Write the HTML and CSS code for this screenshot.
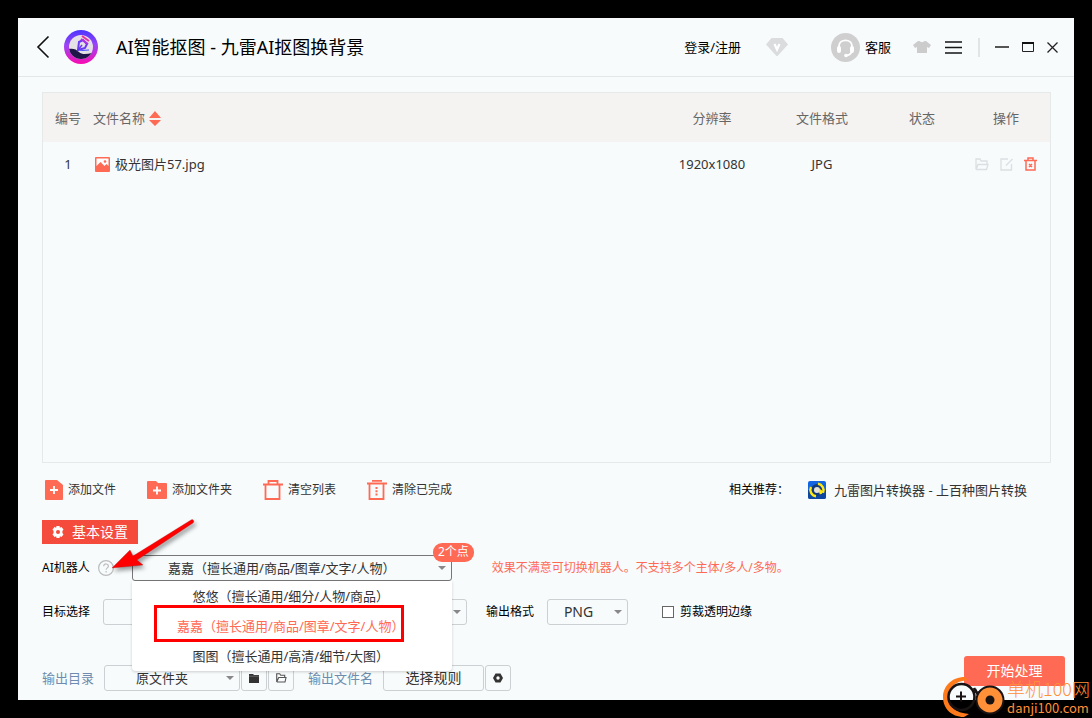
FILE: index.html
```html
<!DOCTYPE html>
<html lang="zh-CN">
<head>
<meta charset="utf-8">
<title>AI智能抠图 - 九雷AI抠图换背景</title>
<link rel="stylesheet" href="styles.css">
</head>
<body>
<main class="window">
  <header class="titlebar">
    <button class="icon-btn back" aria-label="返回"><svg width="14" height="24" viewBox="0 0 14 24"><path d="M12.500 1.500 2 12l10.500 10.500" fill="none" stroke="#111" stroke-width="1.600"/></svg></button>
    <svg class="logo" width="34" height="34" viewBox="0 0 34 34">
      <defs>
        <linearGradient id="ring" x1="0" y1="0" x2="0" y2="1"><stop offset="0" stop-color="#4b35ff"/><stop offset=".45" stop-color="#9b45f5"/><stop offset="1" stop-color="#fb0bb0"/></linearGradient>
        <clipPath id="disc"><circle cx="17" cy="17" r="12"/></clipPath>
      </defs>
      <circle cx="17" cy="17" r="17" fill="url(#ring)"/>
      <g clip-path="url(#disc)">
        <rect width="34" height="34" fill="#e3e0e6"/>
        <path d="M4 19c5-1 8 0 11 3 3 3 8 2 13 1v8H4z" fill="#1e1648"/>
      </g>
      <path d="m14 20 1-8 4-2 4 4-2 4z" fill="none" stroke="#6a38f5" stroke-width="2"/>
      <path d="m18 6 7 5" stroke="#ea2fa0" stroke-width="2"/>
      <path d="m17 9 7 5" stroke="#b032e0" stroke-width="2"/>
      <path d="m14 20 4-5" stroke="#6a38f5" stroke-width="1.500"/>
      <path d="M16 20c2 1 5 0 9 0" fill="none" stroke="#4a4fff" stroke-width="1.200"/>
    </svg>
    <h1 class="title">AI智能抠图 - 九雷AI抠图换背景</h1>
    <a class="login" href="#">登录/注册</a>
    <button class="icon-btn vip" aria-label="会员"><svg width="22" height="20" viewBox="0 0 22 20"><path d="M5.500 1h11L22 7.500 11.500 19h-1L0 7.500z" fill="#dadcde"/><path d="m8.500 7 2.500 5.500L13.500 7" fill="none" stroke="#fff" stroke-width="2.200"/></svg></button>
    <button class="icon-btn service"><svg width="29" height="29" viewBox="0 0 29 29"><circle cx="14.500" cy="14.500" r="14.500" fill="#cfcfcf"/><path d="M8 15v-2c0-7.500 13-7.500 13 0v3c0 4-2 6-5 6.500" fill="none" stroke="#fff" stroke-width="1.800"/><rect x="6" y="13" width="4" height="7" rx="2" fill="#fff"/><rect x="19" y="13" width="4" height="7" rx="2" fill="#fff"/><circle cx="15" cy="22.500" r="1.800" fill="#fff"/></svg>客服</button>
    <button class="icon-btn skin" aria-label="换肤"><svg width="18" height="14" viewBox="0 0 18 14"><path d="M5 1h1.500c1 1.500 4 1.500 5 0H13l5 4-2 3-2-1v6H4V7L2 8 0 5z" fill="#ccc"/></svg></button>
    <button class="icon-btn menu" aria-label="菜单"><svg width="17" height="13" viewBox="0 0 17 13"><path d="M0 1h17M0 6.500h17M0 12h17" stroke="#151515" stroke-width="1.600"/></svg></button>
    <span class="divider"></span>
    <button class="icon-btn min" aria-label="最小化"><svg width="14" height="12" viewBox="0 0 14 12"><path d="M0 6h14" stroke="#555" stroke-width="2"/></svg></button>
    <button class="icon-btn max" aria-label="最大化"><svg width="12" height="10" viewBox="0 0 12 10"><path d="M.5.500h11v9H.5z" fill="none" stroke="#222"/><path d="M0 1h12" stroke="#111" stroke-width="2"/></svg></button>
    <button class="icon-btn" aria-label="关闭"><svg width="11" height="11" viewBox="0 0 11 11"><path d="m.5.500 10 10M10.500.500l-10 10" stroke="#222" stroke-width="1.300"/></svg></button>
  </header>

  <section class="content">
    <div class="files">
      <table class="file-table">
        <colgroup><col class="c-no"><col><col class="c-res"><col class="c-fmt"><col class="c-state"><col class="c-ops"></colgroup>
        <thead>
          <tr><th>编号</th><th class="name">文件名称<svg class="sort" width="12" height="16" viewBox="0 0 12 16"><path d="m6 0 6 7H0zM0 9h12l-6 6z" fill="#ff6a55"/></svg></th><th>分辨率</th><th>文件格式</th><th>状态</th><th>操作</th></tr>
        </thead>
        <tbody>
          <tr>
            <td>1</td>
            <td class="name"><span class="file"><svg width="15" height="15" viewBox="0 0 15 15"><rect width="15" height="15" rx="1" fill="#ff6a55"/><path d="M1.500 1.500h12V9l-2-2-2 2-4-4-4 4z" fill="#fff"/><circle cx="10" cy="4.500" r="1.300" fill="#ff6a55"/></svg>极光图片57.jpg</span></td>
            <td>1920x1080</td><td>JPG</td><td></td>
            <td><div class="ops">
              <button class="icon-btn" aria-label="打开"><svg width="14" height="13" viewBox="0 0 14 13"><path d="M1 11.500V1h4l1 2h6v3M1 11.500h10.500l1.500-5H3L1 11.500" fill="none" stroke="#dcdfe1" stroke-width="1.300"/></svg></button>
              <button class="icon-btn" aria-label="编辑"><svg width="13" height="13" viewBox="0 0 13 13"><path d="M8 1H1v11h10.500V6M6 7.500 12.500 1" fill="none" stroke="#dcdfe1" stroke-width="1.300"/></svg></button>
              <button class="icon-btn" aria-label="删除"><svg width="13" height="14" viewBox="0 0 13 14"><path d="M0 3.500h13M4 3V1h5v2M2 4v9h9V4M5 7l3 3M8 7l-3 3" fill="none" stroke="#ff6a55" stroke-width="1.500"/></svg></button>
            </div></td>
          </tr>
        </tbody>
      </table>
    </div>

    <div class="toolbar">
      <button class="tool"><svg width="18" height="20" viewBox="0 0 18 20"><path d="M1 0h11l6 5v14a1 1 0 0 1-1 1H1a1 1 0 0 1-1-1V1a1 1 0 0 1 1-1z" fill="#ff6a55"/><path d="M9 6v8M5 10h8" stroke="#fff" stroke-width="1.800"/></svg>添加文件</button>
      <button class="tool"><svg width="20" height="18" viewBox="0 0 20 18"><path d="M1 0h8l2 2h8a1 1 0 0 1 1 1v14a1 1 0 0 1-1 1H1a1 1 0 0 1-1-1V1a1 1 0 0 1 1-1z" fill="#ff6a55"/><path d="M10 5.500v8M6 9.500h8" stroke="#fff" stroke-width="1.800"/></svg>添加文件夹</button>
      <button class="tool"><svg width="20" height="20" viewBox="0 0 20 20"><path d="M0 4.500h20M5.500 4V1h9v3M2.500 5v14h14V5" fill="none" stroke="#ff6a55" stroke-width="1.800"/></svg>清空列表</button>
      <button class="tool"><svg width="20" height="20" viewBox="0 0 20 20"><path d="M0 3.500h20M5 .800h10M2.500 4v15h14V4" fill="none" stroke="#ff6a55" stroke-width="1.800"/><path d="M9.500 7v8.500" stroke="#ff6a55" stroke-width="2" stroke-dasharray="2 1.200"/></svg>清除已完成</button>
      <span class="recommend">相关推荐：</span>
      <a class="product" href="#"><svg width="18" height="18" viewBox="0 0 18 18"><rect width="18" height="18" rx="2" fill="#1264e0"/><path d="M0 9h18v7a2 2 0 0 1-2 2H2a2 2 0 0 1-2-2z" fill="#0d479f"/><circle cx="9" cy="9" r="6" fill="#123a7a"/><path d="M10 2.800a6.500 6.500 0 0 1 5 9M3 6a6.500 6.500 0 0 0 5 9.300M12 10l1 3" fill="none" stroke="#ffe814" stroke-width="2.400"/><circle cx="9" cy="9" r="3" fill="#e8e2d4"/><path d="m12 8 4 3-4 2z" fill="#ffe814"/></svg>九雷图片转换器 - 上百种图片转换</a>
    </div>

    <h2 class="section-tag"><svg width="12" height="12" viewBox="0 0 12 12"><path d="M4.500 0h3l.4 1.700 1.600-.6L11.500 3.500 10.400 5v2l1.100 1.500-2 2.400-1.600-.6-.4 1.700h-3l-.4-1.700-1.600.6-2-2.400L1.600 7V5L.5 3.500l2-2.400 1.600.6z" fill="#fff"/><circle cx="6" cy="6" r="2" fill="#f44b3c"/></svg>基本设置</h2>

    <div class="row robot-row">
      <label class="label" for="robot">AI机器人</label>
      <button class="icon-btn help" aria-label="帮助"><svg width="16" height="16" viewBox="0 0 16 16"><circle cx="8" cy="8" r="7.400" fill="none" stroke="#bdbdbd" stroke-width="1.200"/><path d="M5.700 6.300c0-3.200 4.700-3 4.700 0 0 1.500-2.300 1.700-2.300 3.400M8.100 11v1.400" fill="none" stroke="#bdbdbd" stroke-width="1.200"/></svg></button>
      <div class="combo robot">
        <select id="robot"><option>嘉嘉（擅长通用/商品/图章/文字/人物）</option></select>
        <span class="badge">2个点</span>
        <ul class="options" role="listbox">
          <li role="option">悠悠（擅长通用/细分/人物/商品）</li>
          <li role="option" class="active" aria-selected="true">嘉嘉（擅长通用/商品/图章/文字/人物）<span class="marker"></span></li>
          <li role="option">图图（擅长通用/高清/细节/大图）</li>
        </ul>
      </div>
      <span class="hint">效果不满意可切换机器人。不支持多个主体/多人/多物。</span>
      <svg class="arrow" width="92" height="58" viewBox="0 0 92 58"><path d="M79 3a1.800 1.800 0 0 1 2 3L25 43l6 5-31 3 18-18 3 6z" fill="#f00" stroke="#a01010" stroke-width=".3"/></svg>
    </div>

    <div class="row target-row">
      <label class="label" for="target">目标选择</label>
      <div class="combo target"><select id="target"><option></option></select></div>
      <label class="label" for="format">输出格式</label>
      <div class="combo format"><select id="format"><option>PNG</option></select></div>
      <label class="check"><input type="checkbox">剪裁透明边缘</label>
    </div>
  </section>

  <footer class="footer">
    <div class="output">
      <label class="out-label" for="dir">输出目录</label>
      <div class="combo dir"><select id="dir"><option>原文件夹</option></select></div>
      <button class="small-btn" aria-label="选择文件夹"><svg width="10" height="9" viewBox="0 0 10 9"><path d="M0 0h4l1 1h5v8H0z" fill="#333"/><path d="M0 2.200h10" stroke="#999" stroke-width=".5"/></svg></button>
      <button class="small-btn" aria-label="打开文件夹"><svg width="11" height="10" viewBox="0 0 11 10"><path d="M.7 9V.7h3l1 1.500h4V4M.7 9h8.300l1-4.500H2.700L.7 9" fill="none" stroke="#555" stroke-width="1.100"/></svg></button>
      <span class="out-label file-name">输出文件名</span>
      <button class="rule-btn">选择规则</button>
      <button class="small-btn" aria-label="规则设置"><svg width="10" height="10" viewBox="0 0 10 10"><path d="M2.500.500h5L10 5 7.500 9.500h-5L0 5z" fill="#333"/><circle cx="5" cy="5" r="1.700" fill="#fff"/></svg></button>
    </div>
    <button class="start">开始处理</button>
  </footer>
</main>

<div class="watermark">
  <svg width="62" height="42" viewBox="0 0 62 42">
    <path d="M22 1C8 1 0 11 0 21c0 11 8 20 21 20l5-3C12 37 5 30 5 21 5 12 12 5 25 4z" fill="#ff7a1a"/>
    <circle cx="18.500" cy="21" r="13" fill="none" stroke="#181212" stroke-width="2.600"/>
    <path d="M31 12c2 6 5 6 8 2M32 13l3 6" fill="none" stroke="#181212" stroke-width="2.500"/>
    <path d="M18 15.500v10M13 20.500h10" stroke="#181212" stroke-width="2"/>
    <circle cx="47" cy="24" r="13.500" fill="#ff9038" stroke="#181212" stroke-width="2"/>
    <circle cx="47" cy="24" r="4.500" fill="#181212"/>
  </svg>
  <div class="mark-text"><span class="mark-name">单机100网</span><span class="mark-url">danji100.com</span></div>
</div>
</body>
</html>
```
FILE: styles.css
```css
* { box-sizing: border-box; }
body {
  margin: 0;
  min-height: 100vh;
  padding: 18px;
  display: flex;
  position: relative;
  background: #000;
  color: #333;
  font: 13px/20px "Noto Sans", "Noto Sans CJK SC", sans-serif;
}
button, select, input { font: inherit; color: inherit; margin: 0; }
button { cursor: pointer; }
a { color: inherit; text-decoration: none; }
svg { display: block; flex: none; }

.window {
  flex: 1;
  min-width: 0;
  display: flex;
  flex-direction: column;
  background: #f7fbfc;
}

.titlebar {
  height: 59px;
  padding: 0 16px 0 18px;
  display: flex;
  align-items: center;
  border-bottom: 1px solid #e4e7e8;
  color: #000;
}
.icon-btn { padding: 0; border: 0; background: none; display: flex; align-items: center; }
.back { margin-right: 14px; }
.title { margin: 0 auto 0 18px; font-size: 18px; font-weight: 400; line-height: 28px; }
.login { margin-right: 25px; }
.vip { margin-right: 43px; }
.service { gap: 5px; margin-right: 22px; }
.skin { margin-right: 14px; }
.menu { margin-right: 16px; }
.divider { width: 2px; height: 19px; background: #e2e5e6; margin-right: 15px; }
.min { margin-right: 13px; }
.max { margin-right: 13px; }

.content {
  flex: 1;
  padding: 15px 23px 0 24px;
  display: flex;
  flex-direction: column;
}
.files { flex: 1; border: 1px solid #e6e9ea; }
.file-table { width: 100%; table-layout: fixed; border-collapse: collapse; text-align: center; }
.file-table th { height: 49px; padding: 0; background: #f5f3f1; color: #666; font-weight: 400; }
.file-table td { height: 44px; padding: 0; }
.file-table .name { text-align: left; }
.c-no { width: 50px; }
.c-res { width: 100px; }
.c-fmt { width: 120px; }
.c-state { width: 80px; }
.c-ops { width: 88px; }
.sort { display: inline-block; vertical-align: middle; margin-left: 4px; }
.file { display: flex; align-items: center; gap: 5px; padding-left: 2px; }
.ops { display: flex; justify-content: center; gap: 11px; }

.toolbar { height: 24px; margin-top: 15px; padding-left: 3px; display: flex; align-items: center; font-size: 12px; }
.tool { margin-right: 31px; padding: 0; border: 0; background: none; display: flex; align-items: center; gap: 5px; }
.recommend { margin-left: auto; margin-right: 19px; color: #000; }
.product { display: flex; align-items: center; gap: 8px; margin-right: 24px; font-size: 13px; }

.section-tag {
  align-self: flex-start;
  margin: 18px 0 0;
  height: 24px;
  padding: 0 10px;
  display: flex;
  align-items: center;
  gap: 8px;
  background: #f44b3c;
  color: #fff;
  font-size: 14px;
  font-weight: 400;
}

.row { display: flex; align-items: center; height: 26px; position: relative; font-size: 12px; color: #000; }
.robot-row { margin-top: 11px; z-index: 2; }
.target-row { margin-top: 18px; }
.label { flex: none; }
.help { margin: 0 18px 0 8px; }

.combo { position: relative; height: 26px; font-size: 13px; color: #333; }
.combo select {
  appearance: none;
  width: 100%;
  height: 100%;
  padding: 0 28px 0 8px;
  border: 1px solid #cdd0d2;
  border-radius: 3px;
  background: #f7fbfc;
  text-align: center;
  text-align-last: center;
}
.combo::after {
  content: "";
  position: absolute;
  right: 6px;
  top: 11px;
  border: 4px solid transparent;
  border-top-color: #888;
  border-bottom: 0;
}
.robot { width: 320px; }
.robot select { border-color: #777; }
.badge {
  position: absolute;
  right: -22px;
  top: -12px;
  height: 19px;
  padding: 0 5px;
  border-radius: 9px;
  background: #ff6a55;
  color: #fff;
  font-size: 12px;
  line-height: 18px;
}
.options {
  position: absolute;
  top: 26px;
  left: 0;
  right: 0;
  margin: 0;
  padding: 0;
  list-style: none;
  background: #fff;
  border-radius: 0 0 4px 4px;
  box-shadow: 0 1px 3px rgba(0, 0, 0, .18);
  line-height: 30px;
  text-align: center;
}
.options li { position: relative; padding-right: 2px; }
.options .active { color: #ff6a55; }
.marker { position: absolute; left: 22px; right: 48px; top: -6px; bottom: -1px; border: 3px solid #f00; }
.hint { margin-left: 40px; color: #ff6a55; }
.arrow { position: absolute; left: 70px; top: -38px; filter: drop-shadow(2px 3px 2px rgba(0, 0, 0, .4)); }

.target { width: 364px; margin: 0 19px 0 13px; }
.format { width: 81px; margin: 0 34px 0 13px; font-size: 14px; }
.format select { padding: 0 22px 0 4px; }
.check { display: flex; align-items: center; gap: 6px; }
.check input { appearance: none; width: 12px; height: 12px; border: 1px solid #666; background: #fff; }

.footer { display: flex; justify-content: space-between; align-items: flex-start; padding: 31px 9px 9px 24px; }
.output { display: flex; align-items: center; padding-top: 9px; }
.out-label { color: #6d8caf; margin-right: 10px; }
.dir { width: 136px; }
.file-name { margin-left: 14px; }
.small-btn, .rule-btn {
  height: 26px;
  padding: 0;
  border: 1px solid #cdd0d2;
  border-radius: 3px;
  background: #f7fbfc;
  display: flex;
  align-items: center;
  justify-content: center;
}
.small-btn { width: 26px; margin-left: 1px; }
.rule-btn { width: 101px; font-size: 14px; }
.start { width: 101px; height: 30px; padding: 0; border: 0; border-radius: 3px; background: #ff6a55; color: #fff; font-size: 14px; }

.watermark {
  position: absolute;
  right: 2px;
  bottom: 0;
  display: flex;
  align-items: flex-end;
  gap: 2px;
  color: #ff9038;
  pointer-events: none;
  font-family: "Noto Sans CJK SC", sans-serif;
}
.mark-text { display: flex; flex-direction: column; }
.mark-name { font-size: 18px; line-height: 20px; font-weight: 300; }
.mark-url { font-size: 13px; line-height: 20px; }
```
